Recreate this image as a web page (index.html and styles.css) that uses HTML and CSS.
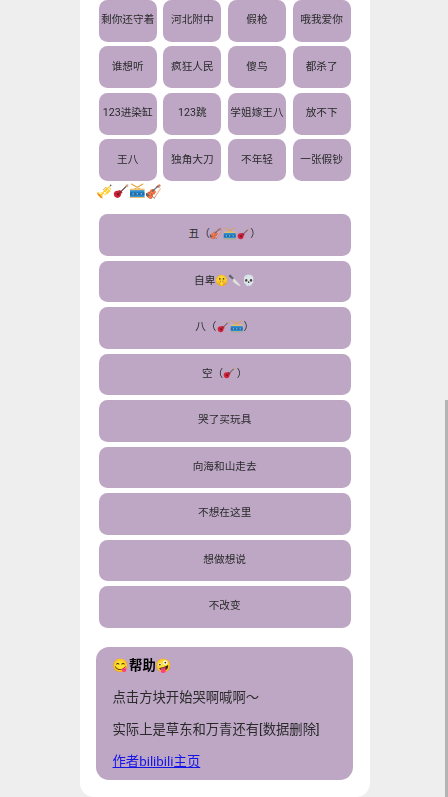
FILE: index.html
```html
<!DOCTYPE html>
<html lang="zh-CN">
<head>
<meta charset="utf-8">
<title>哭啊喊啊</title>
<link rel="stylesheet" href="styles.css">
</head>
<body>
<svg class="defs" width="0" height="0" aria-hidden="true">
  <symbol id="guitar" viewBox="0 0 32 32">
    <path d="M13 13.5c2 1 4.500 3.500 5.500 5.500-1.800.6-2.800 1.500-3 3.500-.3 3.500-2.500 6.500-6.500 6.500-4.500 0-7.500-3-7.500-7.500 0-4 3-6.200 6.500-6.500 2-.2 4-.5 5-1.500z" fill="#d3213a"/>
    <path d="M12 20 L26 6" stroke="#5d3a2c" stroke-width="2.200" stroke-linecap="round"/>
    <path d="M25 3.500 L29 2.500 L30 6 L27 8.500 L24 6z" fill="#c9a58c"/>
    <circle cx="10" cy="22" r="2" fill="#7c1020"/>
    <path d="M7 19.500l5 5" stroke="#3b1a1a" stroke-width="1.200"/>
  </symbol>
  <symbol id="drum" viewBox="0 0 32 32">
    <path d="M5 2 L22 12 M27 2 L10 12" stroke="#e2a23c" stroke-width="2" stroke-linecap="round"/>
    <rect x="2" y="11" width="28" height="4" fill="#f4c26b"/>
    <rect x="2" y="14" width="28" height="15" fill="#2f8fd0"/>
    <rect x="2" y="18" width="28" height="6" fill="#1f6fae"/>
    <g fill="#d9eefb">
      <circle cx="8" cy="21" r="1.300"/><circle cx="16" cy="21" r="1.300"/><circle cx="24" cy="21" r="1.300"/>
    </g>
    <rect x="2" y="27" width="28" height="2" fill="#f4c26b"/>
  </symbol>
</svg>
<main class="card">
  <section class="grid">
    <button class="btn">剩你还守着</button><button class="btn">河北附中</button><button class="btn">假枪</button><button class="btn">哦我爱你</button>
    <button class="btn">谁想听</button><button class="btn">疯狂人民</button><button class="btn">傻鸟</button><button class="btn">都杀了</button>
    <button class="btn">123进染缸</button><button class="btn">123跳</button><button class="btn">学姐嫁王八</button><button class="btn">放不下</button>
    <button class="btn">王八</button><button class="btn">独角大刀</button><button class="btn">不年轻</button><button class="btn">一张假钞</button>
  </section>
  <div class="emoji-row">🎺<svg class="ico"><use href="#guitar"/></svg><svg class="ico"><use href="#drum"/></svg>🎻</div>
  <section class="list">
    <button class="btn">丑（🎻<svg class="ico"><use href="#drum"/></svg><svg class="ico"><use href="#guitar"/></svg>）</button>
    <button class="btn">自卑🤫🔪💀</button>
    <button class="btn">八（<svg class="ico"><use href="#guitar"/></svg><svg class="ico"><use href="#drum"/></svg>）</button>
    <button class="btn">空（<svg class="ico"><use href="#guitar"/></svg>）</button>
    <button class="btn">哭了买玩具</button>
    <button class="btn">向海和山走去</button>
    <button class="btn">不想在这里</button>
    <button class="btn">想做想说</button>
    <button class="btn">不改变</button>
  </section>
  <section class="help">
    <h2>😋帮助🤪</h2>
    <p>点击方块开始哭啊喊啊～</p>
    <p>实际上是草东和万青还有[数据删除]</p>
    <p><a href="#">作者bilibili主页</a></p>
  </section>
</main>
<div class="thumb"></div>
</body>
</html>
```
FILE: styles.css
```css
html, body { margin: 0; height: 100%; overflow: hidden; }
body {
  background: #eeeeee;
  font-family: Roboto, "Noto Sans CJK SC", "Noto Color Emoji", sans-serif;
  color: #2a2a2a;
}
.defs { position: absolute; }
.card {
  width: 290px;
  height: 797px;
  box-sizing: border-box;
  margin-left: 80px;
  background: #fff;
  border-radius: 0 0 14px 14px;
  padding: 0 16.67px 0 16px;
}
.btn {
  display: block;
  margin: 0;
  padding: 0 0 4.5px;
  border: 0;
  border-radius: 8.5px;
  background: #bda7c5;
  color: #2a2a2a;
  font: inherit;
  font-size: 10.67px;
  height: 41.67px;
  box-sizing: border-box;
  white-space: nowrap;
}
.ico {
  width: 16.5px;
  height: 16.5px;
  vertical-align: -3.5px;
}
.grid {
  display: grid;
  grid-template-columns: repeat(4, 58px);
  column-gap: 6.67px;
  row-gap: 4.83px;
  padding: 0 2.67px;
  filter: blur(0.3px);
}
.emoji-row { font-size: 13.33px; line-height: 18px; margin-top: 1.5px; filter: blur(0.3px); }
.list {
  display: flex;
  flex-direction: column;
  gap: 4.83px;
  margin-top: 13.5px;
  padding: 0 2.67px;
  filter: blur(0.3px);
}
.list .ico { width: 13.5px; height: 13.5px; vertical-align: -3px; }
.help {
  margin-top: 19px;
  height: 133.5px;
  box-sizing: border-box;
  background: #bda7c5;
  border-radius: 13px;
  padding: 10px 16.5px;
  font-size: 13.33px;
  filter: blur(0.3px);
}
.help h2 { margin: 0; font-size: 13.33px; line-height: 18px; font-weight: 700; color: #000; }
.help p { margin: 14px 0 0; line-height: 18px; }
.help a { color: #1414e6; text-decoration: underline; }
.thumb {
  position: absolute;
  right: 0;
  top: 400px;
  width: 3px;
  height: 397px;
  background: #b4b4b4;
}
```
